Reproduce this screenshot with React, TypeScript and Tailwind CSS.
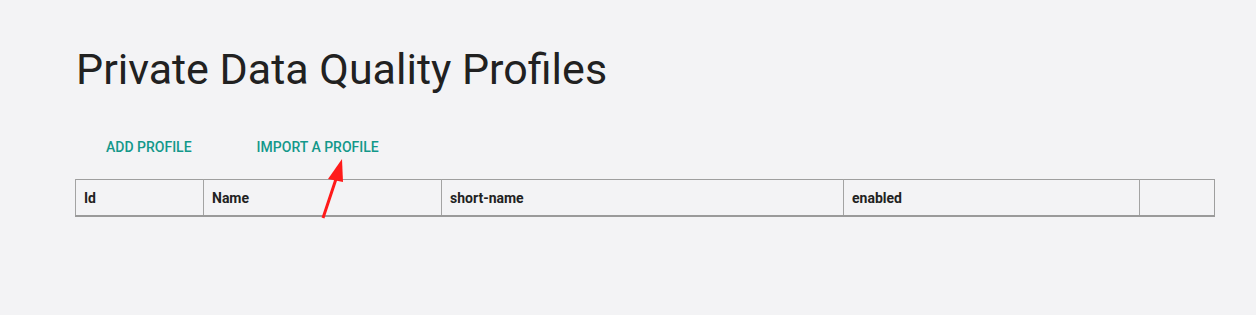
import React from 'react'

const columns = [
  { label: 'Id', width: 'w-[128px]' },
  { label: 'Name', width: 'w-[238px]' },
  { label: 'short-name', width: 'w-[402px]' },
  { label: 'enabled', width: 'w-[296px]' },
  { label: '', width: '' },
]

export default function App() {
  return (
    <div
      className="min-h-[315px] w-full bg-[#f3f3f5] pl-[75px] pr-[41px] pt-[43px]"
      style={{ fontFamily: 'Roboto, "Liberation Sans", sans-serif' }}
    >
      {/* Title */}
      <h1 className="pl-px text-[43px] font-normal leading-[52px] text-[#212121]">
        Private Data Quality Profiles
      </h1>

      {/* Actions */}
      <div className="relative mt-[34px] flex gap-[33px] pl-[15px]">
        <button className="h-9 px-4 text-[14px] font-medium uppercase leading-9 text-[#13988a]">
          Add profile
        </button>
        <button className="h-9 px-4 text-[14px] font-medium uppercase leading-9 text-[#13988a]">
          Import a profile
        </button>

        {/* Annotation arrow */}
        <svg
          className="pointer-events-none absolute left-[240px] top-[29px]"
          width="30"
          height="62"
          viewBox="0 0 30 62"
        >
          <line x1="8" y1="60" x2="22" y2="18" stroke="#ff1a1a" strokeWidth="3" />
          <polygon points="27,1 13,21 28,24" fill="#ff1a1a" />
        </svg>
      </div>

      {/* Table */}
      <table className="mt-[14px] w-full table-fixed border-collapse border border-b-2 border-[#9e9e9e] border-b-[#9a9a9a]">
        <thead>
          <tr className="h-[36px]">
            {columns.map((c, i) => (
              <th
                key={i}
                className={`${c.width} border-l border-[#a3a3a3] px-2 pt-0.5 text-left text-[14px] font-bold text-[#222]`}
              >
                {c.label}
              </th>
            ))}
          </tr>
        </thead>
      </table>
    </div>
  )
}
